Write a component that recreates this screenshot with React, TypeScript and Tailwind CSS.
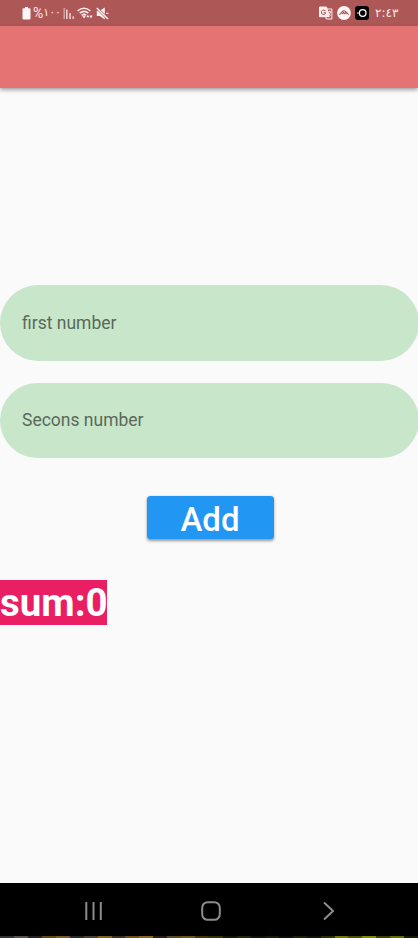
import React from "react";

const edge = [
  "bg-[#303332]", "bg-[#55504a]", "bg-[#24231b]", "bg-[#5f4a20]", "bg-[#7a5a24]", "bg-[#292a28]",
  "bg-[#4a4030]", "bg-[#806028]", "bg-[#3c301c]", "bg-[#6c5020]", "bg-[#8a6526]", "bg-[#282016]",
  "bg-[#5c4822]", "bg-[#6d5420]", "bg-[#453511]", "bg-[#34340a]", "bg-[#15150a]", "bg-[#252608]",
  "bg-[#10110a]", "bg-[#1c1c08]", "bg-[#0b0b08]", "bg-[#202009]", "bg-[#12120a]", "bg-[#303006]",
  "bg-[#727708]", "bg-[#4b5008]", "bg-[#838808]", "bg-[#3a3e08]", "bg-[#656a08]", "bg-[#181a08]",
];

function StatusBar() {
  return (
    <header className="flex h-[26px] shrink-0 items-center bg-[#ad5757] text-[#fbeaea]">
      <svg className="ml-[22px] h-[13px] w-[9px]" viewBox="0 0 9 13" fill="#fff5f5">
        <path d="M3 0h3v1.3h1.5q1 0 1 1v9.2q0 1-1 1h-6q-1 0-1-1V2.3q0-1 1-1H3z" />
      </svg>
      <span dir="ltr" className="ml-[2px] flex h-[16px] w-[26px] items-center whitespace-nowrap font-['Roboto','DejaVu_Sans',sans-serif] text-[14px] leading-[16px]">
        <span className="w-[11px]">%</span><span className="font-['DejaVu_Sans',sans-serif] text-[11px]">١٠٠</span>
      </span>
      <svg className="ml-[4px] h-[13px] w-[12px]" viewBox="0 0 12 13" fill="#fbeaea">
        <path opacity=".55" d="M.5 1h1.4v11H.5z" />
        <path d="M3.2 2.5h1.3V12H3.2zM6.4 6h1.3v6H6.4zM9.6 9.3h1.2V12H9.6z" />
      </svg>
      <svg className="ml-[2px] h-[14px] w-[17px]" viewBox="0 0 17 14" fill="none" stroke="#fbeaea" strokeWidth="1.5">
        <path d="M.6 4.9Q7-.3 13.4 4.9M2.7 7.2Q7 3.6 11.4 7.2M4.7 9.3Q7 7.4 9.2 9.3" />
        <path d="M5.4 10.2Q7 9 8.6 10.2L7 12.5z" fill="#fbeaea" stroke="none" />
        <path d="M9.3 11.2l1.5-2.4 1.6 2.4zM12.4 9.6h3.2l-1.6 3z" fill="#fbeaea" stroke="none" />
      </svg>
      <svg className="ml-[2px] h-[13px] w-[13px]" viewBox="0 0 13 13" fill="#fff3f3">
        <path d="M.8 3.8h3L8.8.5v12L3.8 9h-3z" />
        <path d="M.8 1l11.2 11" stroke="#ad5757" strokeWidth="2.6" />
        <path d="M.8 1l11.2 11" stroke="#fff3f3" strokeWidth="1.5" />
        <path d="M10 6.3h2.5" fill="none" stroke="#fff3f3" strokeWidth="1" />
      </svg>
      <div className="ml-auto mr-[20px] flex items-center">
        <svg className="h-[14px] w-[14px]" viewBox="0 0 14 14" fill="none" stroke="#fff0f0">
          <path d="M.5 1h7l2.8 9.7H.5z" fill="#fff0f0" />
          <path d="M7.7 3h5.2v10H7.3l-.7-2.3" />
          <path d="M6.4 4.7q-3.3-1.7-4.1 1.1Q2.2 8.8 5 8.5 6.7 8.2 6.4 6.4H4.6" stroke="#ad5757" strokeWidth="1" />
          <path d="M8.8 5.7h3.5M10.6 4.7v1M11.7 5.9q-.5 2-2.5 3.3M9.2 6.7q1 2 2.7 2.8" strokeWidth=".9" />
        </svg>
        <svg className="ml-[4px] h-[14px] w-[14px]" viewBox="0 0 14 14">
          <circle cx="7" cy="7" r="6.9" fill="#fff5f5" />
          <path d="M2.4 8.6L5 5.8q2-2 4 0l2.6 2.8M5 8.2l1.4-1.8 1 1.2.9-.9L9.4 8" fill="none" stroke="#ad5757" strokeWidth="1.1" />
        </svg>
        <svg className="ml-[4px] h-[14px] w-[14px]" viewBox="0 0 14 14">
          <rect width="14" height="14" rx="3" fill="#050303" />
          <circle cx="7.7" cy="7" r="3.3" fill="none" stroke="#fff" strokeWidth="1.3" />
          <path d="M2 7h1.7" stroke="#fff" />
        </svg>
        <span dir="ltr" className="ml-[6px] w-[23px] whitespace-nowrap font-['DejaVu_Sans',sans-serif] text-[12px] leading-[16px]">٢:٤٣</span>
      </div>
    </header>
  );
}

function Field({ label }: { label: string }) {
  return (
    <label className="flex h-[75.5px] w-[419px] shrink-0 items-center rounded-full bg-[#c8e6c9] pl-[22px] pt-px text-[17.5px] leading-none text-[#5a695b]">
      {label}
    </label>
  );
}

export default function App() {
  return (
    <div className="flex h-[938px] w-[418px] flex-col overflow-hidden bg-[#fafafa] font-['Roboto',sans-serif]">
      <StatusBar />
      <div className="h-[61.5px] shrink-0 bg-[#e57373] shadow-[0_2px_4px_rgba(0,0,0,0.36)]" />
      <main className="flex min-h-0 flex-1 flex-col items-start pt-[197.5px]">
        <Field label="first number" />
        <div className="h-[22px] shrink-0" />
        <Field label="Secons number" />
        <button className="ml-[146.5px] mt-[38px] flex h-[42.5px] w-[127px] shrink-0 items-center justify-center rounded-[3.5px] bg-[#2196f3] pt-[4px] text-[33px] font-medium leading-none text-white shadow-[0_1.5px_3px_rgba(0,0,0,0.4)]">
          Add
        </button>
        <div className="mt-[41px] flex h-[45px] w-[107px] shrink-0 items-center whitespace-nowrap bg-[#e91e63] pt-[2px] text-[38.5px] font-bold leading-none text-white">
          sum:0
        </div>
      </main>
      <nav className="flex h-[53px] shrink-0 items-center bg-black pt-[3px]">
        <svg className="ml-[84px] h-[20px] w-[20px]" viewBox="0 0 20 20" stroke="#8c8c8c" strokeWidth="2">
          <path d="M2.3 1v18M9.5 1v18M16.8 1v18" />
        </svg>
        <svg className="ml-[97px] h-[20px] w-[20px]" viewBox="0 0 20 20" fill="none" stroke="#8c8c8c" strokeWidth="2">
          <rect x="1.2" y="1.2" width="17.6" height="17.6" rx="5.5" />
        </svg>
        <svg className="ml-[101px] h-[20px] w-[14px]" viewBox="0 0 14 20" fill="none" stroke="#8c8c8c" strokeWidth="2">
          <path d="M2 1.5L11 10l-9 8.5" />
        </svg>
      </nav>
      <div className="flex h-[2px] shrink-0">
        {edge.map((tone, i) => <div key={i} className={`flex-1 ${tone}`} />)}
      </div>
    </div>
  );
}
